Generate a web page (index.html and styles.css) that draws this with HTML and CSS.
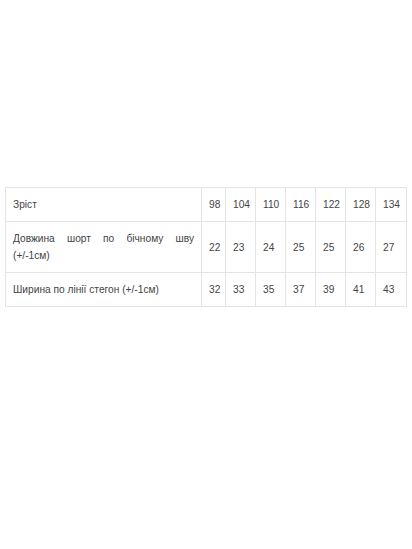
FILE: index.html
```html
<!DOCTYPE html>
<html lang="uk">
<head>
<meta charset="utf-8">
<link rel="stylesheet" href="styles.css">
</head>
<body>
<div class="wrap">
  <table class="sizes">
    <colgroup>
      <col class="c-label"><col class="c-n1"><col class="c-n"><col class="c-n"><col class="c-n"><col class="c-n"><col class="c-n"><col class="c-nl">
    </colgroup>
    <tbody>
      <tr class="r1"><td class="label">Зріст</td><td>98</td><td>104</td><td>110</td><td>116</td><td>122</td><td>128</td><td>134</td></tr>
      <tr class="r2"><td class="label">Довжина шорт по бічному шву (+/-1см)</td><td>22</td><td>23</td><td>24</td><td>25</td><td>25</td><td>26</td><td>27</td></tr>
      <tr class="r3"><td class="label">Ширина по лінії стегон (+/-1см)</td><td>32</td><td>33</td><td>35</td><td>37</td><td>39</td><td>41</td><td>43</td></tr>
    </tbody>
  </table>
</div>
</body>
</html>
```
FILE: styles.css
```css
html, body { margin: 0; padding: 0; background: #fff; }
body { font-family: "Liberation Sans", Arial, sans-serif; color: #444; }
.wrap { padding: 187px 6px 0 5px; }
.sizes {
  border-collapse: collapse;
  table-layout: fixed;
  width: 401px;
  font-size: 10.2px;
  line-height: 17px;
}
.c-label { width: 196px; }
.c-n1 { width: 24px; }
.c-n { width: 30px; }
.c-nl { width: 31px; }
.sizes td {
  border: 1px solid #e4e4e4;
  padding: 8px 0 8px 7px;
  vertical-align: middle;
  white-space: nowrap;
}
.sizes td.label {
  white-space: normal;
  text-align: justify;
  padding-right: 7px;
}
```
